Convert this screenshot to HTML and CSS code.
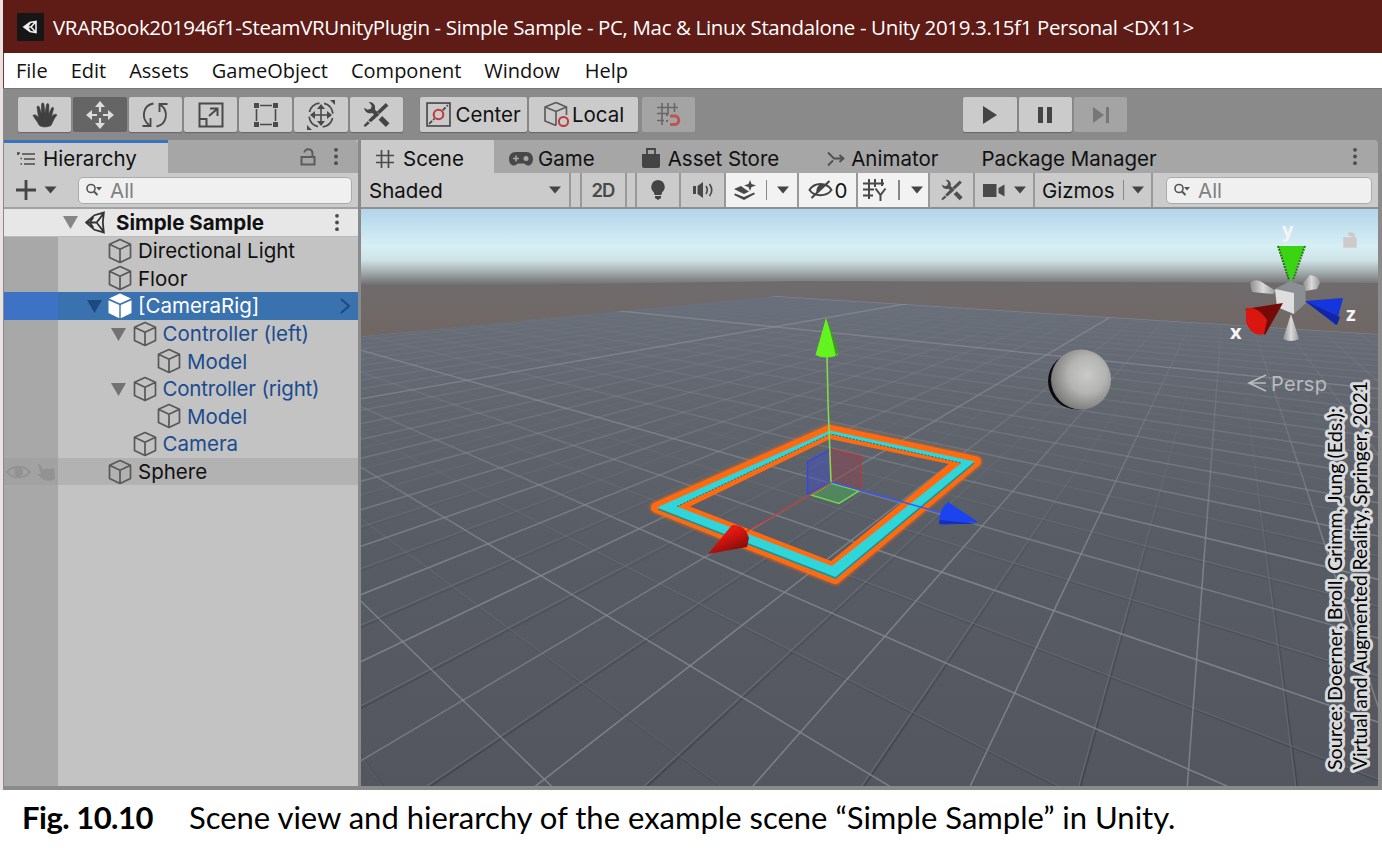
FILE: index.html
```
<!DOCTYPE html>
<html lang="en">
<head>
<meta charset="utf-8">
<title>Simple Sample - Unity</title>
<link rel="stylesheet" href="styles.css">
</head>
<body>
<svg class="defs" width="0" height="0" aria-hidden="true">
  <symbol id="cube" viewBox="0 0 24 26"><path d="M12 1.500 22.500 6.300V19.500L12 24.500 1.500 19.500V6.300ZM1.500 6.300 12 11.300 22.500 6.300M12 11.300V24.500" fill="none" stroke="#585858" stroke-width="1.700" stroke-linejoin="round"/></symbol>
  <symbol id="cubeSolid" viewBox="0 0 24 26"><path d="M12 .500 23 5.500 12 10.500 1 5.500ZM.500 7.200 11.300 12V25.300L.500 20ZM23.500 7.200 12.700 12V25.300L23.500 20Z" fill="#fff"/></symbol>
  <symbol id="dots" viewBox="0 0 6 20"><circle cx="3" cy="3" r="2"/><circle cx="3" cy="10" r="2"/><circle cx="3" cy="17" r="2"/></symbol>
  <symbol id="down" viewBox="0 0 12 8"><path d="M0 .500H12L6 7.500Z"/></symbol>
  <symbol id="search" viewBox="0 0 18 14"><circle cx="6" cy="5.500" r="4" fill="none" stroke="#555" stroke-width="1.600"/><path d="M9 8.500 12.500 12" stroke="#555" stroke-width="2"/><path d="M11 4H17L14 7.500Z" fill="#555"/></symbol>
  <symbol id="tools" viewBox="0 0 28 28"><path d="M23 3 25.500 5.500 17 13.500 14.500 11ZM14 11.500 17 14 8.500 21.500 6 19.500ZM5.500 20.500 7.500 22.500 3 26 1.500 24.500Z"/><path d="M2 7.500C3 12.500 6.500 13.500 10 12.500L12.500 15 15.500 12 12.500 9.500C13.500 5.500 11 1.500 6.500 2L9.500 5.500 8.500 8.500 5.500 9.500Z"/><path d="M19.500 15.500 26.500 22.500 23 26 16 19Z"/></symbol>
  <symbol id="lock" viewBox="0 0 16 18"><path d="M1.500 9H14.500V16.500H1.500ZM12.500 9V5.500C12.500 0 4.500 0 4.500 4.500" fill="none" stroke="currentColor" stroke-width="2"/></symbol>
</svg>

<main class="figure">
<div class="window">
  <header class="titlebar">
    <svg class="app-icon" viewBox="0 0 27 28"><rect width="27" height="28" fill="#161616"/><path d="M7 14 13 9.500 19 8.500V19.500L13 18.500ZM7 14H14L19 8.500M14 14 19 19.500M10 14 13 10M10 14 13 18" fill="none" stroke="#eee" stroke-width="1.600"/></svg>
    <span class="t title">VRARBook201946f1-SteamVRUnityPlugin - Simple Sample - PC, Mac &amp; Linux Standalone - Unity 2019.3.15f1 Personal &lt;DX11&gt;</span>
  </header>
  <nav class="menubar">
    <span class="t">File</span><span class="t">Edit</span><span class="t">Assets</span><span class="t">GameObject</span><span class="t">Component</span><span class="t">Window</span><span class="t help">Help</span>
  </nav>

  <div class="toolbar">
    <div class="group transform">
      <button class="btn"><svg viewBox="0 0 28 28" width="28" height="28"><path d="M8 24C6 20 4 18 2 14.500 3 13 5 13.500 7.500 16.500L6 6.500C6 4.500 8 4.500 8.500 6.500L10.500 13 10.500 3.500C10.500 1.500 13 1.500 13 3.500L14 12.500 15.500 3.500C16 2 18 2.500 17.900 4L17.800 13 20.500 7C21.500 5.500 23 6.500 22.500 8L20.500 15.500C23 13 25 12.500 26 14 23 17 22 21 20 24.500 17 26.500 10 26.500 8 24Z" fill="#404040" stroke="#404040" stroke-width=".6"/></svg></button>
      <button class="btn on"><svg viewBox="0 0 28 28" width="28" height="28"><path d="M14 4V11M14 17V24M4 14H11M17 14H24" stroke="#ddd" stroke-width="2.200"/><path d="M14 0 19 6H9ZM14 28 19 22H9ZM0 14 6 9V19ZM28 14 22 9V19Z" fill="#ddd"/></svg></button>
      <button class="btn"><svg viewBox="0 0 28 28" width="28" height="28"><path d="M12.500 2.500C2 4 -.500 17 8 24M15.500 25.500C26 23.500 28.500 10 19 3.500M1.500 25H9.500V17M26.500 3H18.500V11" fill="none" stroke="#4a4a4a" stroke-width="1.900"/></svg></button>
      <button class="btn"><svg viewBox="0 0 28 28" width="28" height="28"><path d="M2.500 2.500H25.500V25.500H2.500ZM2.500 18H9.500V25.500M12 15 20 8M13 7.500H20.500V15" fill="none" stroke="#4a4a4a" stroke-width="2"/></svg></button>
      <button class="btn"><svg viewBox="0 0 28 28" width="28" height="28"><path d="M8 4.500H20M8 23.500H20M4.500 8V20M23.500 8V20" fill="none" stroke="#4a4a4a" stroke-width="1.600"/><path d="M2 2H7V7H2ZM21 2H26V7H21ZM2 21H7V26H2ZM21 21H26V26H21Z" fill="#4a4a4a"/></svg></button>
      <button class="btn"><svg viewBox="0 0 30 30" width="30" height="30"><circle cx="15" cy="15" r="12" fill="none" stroke="#4a4a4a" stroke-width="1.700" stroke-dasharray="14 4.800" stroke-dashoffset="-3"/><path d="M15 8V22M8 15H22" stroke="#4a4a4a" stroke-width="1.600"/><path d="M15 4 19 9H11ZM15 26 19 21H11ZM4 15 9 11V19ZM26 15 21 11V19ZM24 0H29V5ZM1 25V30H6Z" fill="#4a4a4a"/></svg></button>
      <button class="btn"><svg viewBox="0 0 28 28" width="29" height="29" fill="#454545"><use href="#tools"/></svg></button>
    </div>
    <div class="group pivot">
      <button class="btn center"><svg viewBox="0 0 24 24" width="25" height="25"><rect x="1" y="1" width="22" height="22" fill="none" stroke="#4a4a4a" stroke-width="1.600"/><path d="M3 21 8 16M16 8 21 3" stroke="#4a4a4a" stroke-width="1.800" stroke-dasharray="4 1.500"/><circle cx="12" cy="12" r="4.600" fill="none" stroke="#c33a3a" stroke-width="2"/></svg><span class="t">Center</span></button>
      <button class="btn local"><svg viewBox="0 0 28 28" width="28" height="28"><path d="M13 1.500 23.500 6V14M13 24.500 2 20V6L13 1.500M2 6 13 10.500 23.500 6M13 10.500V24.500" fill="none" stroke="#585858" stroke-width="1.600"/><circle cx="20.500" cy="20.500" r="4.600" fill="#cbcbcb" stroke="#c33a3a" stroke-width="2"/></svg><span class="t">Local</span></button>
      <button class="btn dim snap"><svg viewBox="0 0 26 26" width="26" height="26"><path d="M6 1V23M12 1V11M18.500 1V10M1 5.500H22M1 11.500H13M1 18.500H8" stroke="#686868" stroke-width="1.600"/><path d="M10 13H12M10 19H12" stroke="#686868" stroke-width="2"/><path d="M14 14H19C24 14 24 22.500 19 22.500H14" fill="none" stroke="#bd5555" stroke-width="3"/></svg></button>
    </div>
    <div class="group play">
      <button class="btn"><svg viewBox="0 0 16 20" width="16" height="20"><path d="M1 1 15 10 1 19Z" fill="#444"/></svg></button>
      <button class="btn"><svg viewBox="0 0 16 18" width="16" height="18"><path d="M1 1H6V17H1ZM10 1H15V17H10Z" fill="#444"/></svg></button>
      <button class="btn dim"><svg viewBox="0 0 18 18" width="18" height="18"><path d="M1 1 12 9 1 17ZM14 1H17V17H14Z" fill="#777"/></svg></button>
    </div>
  </div>

  <div class="workspace">
    <section class="hierarchy">
      <div class="tabs">
        <div class="tab active"><svg viewBox="0 0 18 16" width="18" height="16"><path d="M5 3H18M7 8H18M7 13H18" stroke="#4a4a4a" stroke-width="1.700"/><path d="M0 2H3M3.500 7.500H5M3.500 13H5M1 2V4" stroke="#4a4a4a" stroke-width="1.700"/></svg><span class="t">Hierarchy</span></div>
        <svg class="lock" width="16" height="18"><use href="#lock"/></svg>
        <svg class="more" width="6" height="19"><use href="#dots"/></svg>
      </div>
      <div class="tools">
        <svg class="plus" viewBox="0 0 42 22" width="42" height="22"><path d="M10 1V21M0 11H20" stroke="#444" stroke-width="2.800"/><path d="M28.500 7.500H40.500L34.500 14.500Z" fill="#444"/></svg>
        <div class="search"><svg width="18" height="14"><use href="#search"/></svg><span class="t">All</span></div>
      </div>
      <div class="scene-row"><svg class="arrow" width="15" height="13"><path d="M0 0H15L7.500 13Z" fill="#868686"/></svg><svg viewBox="0 0 22 22" width="23" height="23"><path d="M2 11 10 4 19 1.500 18 11 19 20.500 10 18ZM2 11H12L19 2M12 11 19 20M5.500 11 9 6M5.500 11 9 16" fill="none" stroke="#333" stroke-width="1.700"/></svg><span class="t">Simple Sample</span><svg class="more" width="6" height="19"><use href="#dots"/></svg></div>
      <ul class="tree">
        <li class="row d1"><svg class="cube"><use href="#cube"/></svg><span class="t">Directional Light</span></li>
        <li class="row d1"><svg class="cube"><use href="#cube"/></svg><span class="t">Floor</span></li>
        <li class="row d1 selected"><svg class="arrow" width="15" height="13"><path d="M0 0H15L7.500 13Z" fill="#1c4a80"/></svg><svg class="cube"><use href="#cubeSolid"/></svg><span class="t">[CameraRig]</span><svg class="chev" viewBox="0 0 10 16" width="10" height="16"><path d="M1 1 9 8 1 15" fill="none" stroke="#1c4a80" stroke-width="2"/></svg></li>
        <li class="row d2 prefab"><svg class="arrow" width="15" height="13"><path d="M0 0H15L7.500 13Z" fill="#727272"/></svg><svg class="cube"><use href="#cube"/></svg><span class="t">Controller (left)</span></li>
        <li class="row d3 prefab"><svg class="cube"><use href="#cube"/></svg><span class="t">Model</span></li>
        <li class="row d2 prefab"><svg class="arrow" width="15" height="13"><path d="M0 0H15L7.500 13Z" fill="#727272"/></svg><svg class="cube"><use href="#cube"/></svg><span class="t right">Controller (right)</span></li>
        <li class="row d3 prefab"><svg class="cube"><use href="#cube"/></svg><span class="t">Model</span></li>
        <li class="row d2 prefab"><svg class="cube"><use href="#cube"/></svg><span class="t">Camera</span></li>
        <li class="row d1 hover"><svg class="vis" viewBox="0 0 50 20" width="50" height="20"><path d="M1 10C7 3 18 3 24 10 18 17 7 17 1 10Z" fill="none" stroke="#929292" stroke-width="1.800"/><circle cx="12.500" cy="10" r="4.500" fill="#929292"/><path d="M32 2C34 1 35 3 37 8L40 6 43 7 48 6 49 17 45 19 38 18 31 12 35 12Z" fill="#929292"/></svg><svg class="cube"><use href="#cube"/></svg><span class="t">Sphere</span></li>
      </ul>
    </section>

    <section class="sceneview">
      <div class="tabs">
        <div class="tab active scene"><svg viewBox="0 0 18 18" width="18" height="18"><path d="M5.500 0V18M12.500 0V18M0 5.500H18M0 12.500H18" stroke="#4a4a4a" stroke-width="1.700"/></svg><span class="t">Scene</span></div>
        <div class="tab game"><svg viewBox="0 0 24 14" width="24" height="14"><path d="M7 0H17C27 0 25 14 19 13.500 17 13.500 16 11.500 14.500 11.500H9.500C8 11.500 7 13.500 5 13.500-1 14-3 0 7 0Z" fill="#484848"/><path d="M7 3.500V9.500M4 6.500H10" stroke="#a6a6a6" stroke-width="1.600"/><circle cx="17" cy="6.500" r="2.500" fill="#a6a6a6"/></svg><span class="t">Game</span></div>
        <div class="tab store"><svg viewBox="0 0 18 21" width="18" height="21"><path d="M0 6H18V18Q18 20 16 20H2Q0 20 0 18Z" fill="#444"/><path d="M5 9V1H13V9" fill="none" stroke="#444" stroke-width="1.800"/></svg><span class="t">Asset Store</span></div>
        <div class="tab animator"><svg viewBox="0 0 18 16" width="18" height="16"><path d="M1 1.500 7 7.500H16M1 14.500 6 9.500M12.500 4 16.500 7.500 12.500 11" fill="none" stroke="#505050" stroke-width="1.800"/></svg><span class="t">Animator</span></div>
        <div class="tab package"><span class="t">Package Manager</span></div>
        <svg class="more" width="6" height="19"><use href="#dots"/></svg>
      </div>
      <div class="scenebar">
        <div class="cell shaded"><span class="t">Shaded</span><svg class="dn" width="12" height="8"><use href="#down"/></svg></div>
        <div class="cell gap"></div>
        <div class="cell two"><span class="t">2D</span></div>
        <div class="cell gap"></div>
        <div class="cell bulb"><svg viewBox="0 0 16 22" width="16" height="22"><path d="M8 1A7 7 0 0 1 12 13.500L11.500 16H4.500L4 13.500A7 7 0 0 1 8 1ZM5 17H11V19L8 21 5 19Z" fill="#444"/></svg></div>
        <div class="cell sound"><svg viewBox="0 0 22 18" width="22" height="18"><path d="M1 5H4V13H1ZM5.500 5 11 1V17L5.500 13Z" fill="#484848"/><path d="M14 5Q16.500 9 14 13M17.500 3Q22 9 17.500 15" fill="none" stroke="#484848" stroke-width="1.600"/></svg></div>
        <div class="cell lit fx"><svg viewBox="0 0 22 20" width="22" height="20"><path d="M16 0 17.500 4 22 5.500 17.500 7 16 11 14.500 7 10 5.500 14.500 4ZM0 9 7 6 11 9 15 11.500 10 14ZM1 13.500 10 17 20 12.500 21 14 10 20 0 15Z" fill="#484848"/></svg><i class="bar"></i><svg class="dn" width="12" height="8"><use href="#down"/></svg></div>
        <div class="cell lit eye"><svg viewBox="0 0 24 20" width="25" height="20"><path d="M1 10C6 2 18 2 23 10 18 17 6 17 1 10ZM3 18 21 1" fill="none" stroke="#444" stroke-width="2"/><path d="M8 13 16 5C12 2 7 7 8 13Z" fill="#444"/></svg><span class="t">0</span></div>
        <div class="cell lit gridc"><svg viewBox="0 0 24 24" width="24" height="24"><path d="M6 1V21M12 1V9M19 1V8M0 5.500H21M0 11.500H11M0 17.500H10M12.500 10.500 17.500 17 22.500 10.500M17.500 16V23" fill="none" stroke="#484848" stroke-width="2"/></svg><i class="bar"></i><svg class="dn" width="12" height="8"><use href="#down"/></svg></div>
        <div class="cell wrench"><svg viewBox="0 0 28 28" width="24" height="24" fill="#505050"><use href="#tools"/></svg></div>
        <div class="cell cam"><svg viewBox="0 0 22 15" width="22" height="15"><path d="M0 1H13.500V14H0ZM15.500 5 21.500 1.500V13.500L15.500 10Z" fill="#4a4a4a"/></svg><svg class="dn" width="12" height="8"><use href="#down"/></svg></div>
        <div class="cell gizmos"><span class="t">Gizmos</span><i class="bar"></i><svg class="dn" width="12" height="8"><use href="#down"/></svg></div>
        <div class="search"><svg width="18" height="14"><use href="#search"/></svg><span class="t">All</span></div>
      </div>

      <svg class="viewport" viewBox="361 209 1017 577" width="1017" height="577">
        <defs>
          <linearGradient id="sky" x1="0" y1="209" x2="0" y2="290" gradientUnits="userSpaceOnUse"><stop offset="0" stop-color="#b3d4e9"/><stop offset=".45" stop-color="#d6eff5"/><stop offset=".63" stop-color="#cfe3e6"/><stop offset=".78" stop-color="#a3adaf"/><stop offset=".94" stop-color="#6f6c6d"/><stop offset="1" stop-color="#6e6767"/></linearGradient>
          <linearGradient id="ground" x1="0" y1="283" x2="0" y2="337" gradientUnits="userSpaceOnUse"><stop offset="0" stop-color="#6f6b6d"/><stop offset="1" stop-color="#706763"/></linearGradient>
          <linearGradient id="floor" x1="0" y1="296" x2="0" y2="786" gradientUnits="userSpaceOnUse"><stop offset="0" stop-color="#6a707b"/><stop offset=".2" stop-color="#61666f"/><stop offset=".5" stop-color="#585c65"/><stop offset="1" stop-color="#53565e"/></linearGradient>
          <linearGradient id="majorInk" x1="0" y1="300" x2="0" y2="560" gradientUnits="userSpaceOnUse"><stop offset="0" stop-color="#868a90" stop-opacity="0"/><stop offset=".3" stop-color="#868a90" stop-opacity=".25"/><stop offset="1" stop-color="#868a90" stop-opacity=".8"/></linearGradient>
          <linearGradient id="minorInk" x1="0" y1="340" x2="0" y2="600" gradientUnits="userSpaceOnUse"><stop offset="0" stop-color="#7c8087" stop-opacity="0"/><stop offset="1" stop-color="#7c8087" stop-opacity=".4"/></linearGradient>
          <linearGradient id="shadeInk" x1="0" y1="480" x2="0" y2="780" gradientUnits="userSpaceOnUse"><stop offset="0" stop-color="#3b3e45" stop-opacity="0"/><stop offset="1" stop-color="#3b3e45" stop-opacity=".65"/></linearGradient>
          <clipPath id="plane"><path d="M361 336.500 775 296 1378 334V786H361Z"/></clipPath>
          <radialGradient id="ball" cx=".6" cy=".42" r=".62"><stop offset="0" stop-color="#cacac9"/><stop offset=".5" stop-color="#b4b4b3"/><stop offset="1" stop-color="#787978"/></radialGradient>
          <linearGradient id="redCone" x1="0" y1="0" x2=".6" y2="1"><stop offset="0" stop-color="#f03020"/><stop offset=".5" stop-color="#d81410"/><stop offset="1" stop-color="#7d0c08"/></linearGradient>
          <linearGradient id="grey" x1="0" x2="1"><stop offset="0" stop-color="#8d8d8d"/><stop offset=".5" stop-color="#dadada"/><stop offset="1" stop-color="#989898"/></linearGradient>
          <filter id="soft" x="-10%" y="-10%" width="120%" height="120%"><feGaussianBlur stdDeviation="1.100"/></filter>
        </defs>
        <rect x="361" y="209" width="1017" height="90" fill="url(#sky)"/>
        <path d="M361 287 800 281 1378 283V350H361Z" fill="url(#ground)"/>
        <path d="M361 336.500 775 296 1378 334V786H361Z" fill="url(#floor)"/>
        <g clip-path="url(#plane)">
          <g id="shade" stroke="url(#shadeInk)" stroke-width="2"></g>
          <g id="minor" stroke="url(#minorInk)" stroke-width="1.300"></g>
          <g id="major" stroke="url(#majorInk)" stroke-width="1.500"></g>
          <g id="axis" stroke="#90939a" stroke-opacity=".55" stroke-width="1.500"></g>
        </g>

        <ellipse cx="1077.500" cy="381" rx="29.500" ry="28.500" fill="#0b0b0b"/>
        <circle cx="1081" cy="379.500" r="30" fill="url(#ball)"/>

        <g fill="none" stroke="#ff6a10" stroke-linejoin="round">
          <path d="M829.500 430 976 461.500 835.500 579 656 507.500Z" stroke-width="13" opacity=".5" filter="url(#soft)"/>
          <path d="M829.500 430 976 461.500 835.500 579 656 507.500Z" stroke-width="10"/>
        </g>
        <path d="M829.500 430 976 461.500 835.500 579 656 507.500ZM830 439 690 506.500 831 561 949 464Z" fill="#ff6a10" fill-rule="evenodd"/>
        <path d="M830 430.500 975 461.500 835.500 579 657 507.500ZM830 434 677 506.500 832 566 961.500 463Z" fill="#2fd5d9" fill-rule="evenodd"/>
        <path d="M658 509 835.500 578 974 463" fill="none" stroke="#1c8f93" stroke-width="1.600"/>
        <path d="M677 506.500 830 434 961.500 463" fill="none" stroke="#197276" stroke-width="1" stroke-dasharray="2 1.500"/>

        <path d="M831 482 807.500 494V462L831 449Z" fill="#4250c0" fill-opacity=".5" stroke="#3346e6" stroke-width="1.300"/>
        <path d="M831 482 861 490V456L831 449Z" fill="#8a4450" fill-opacity=".5" stroke="#b73a3c" stroke-width="1.300"/>
        <path d="M831 483 859 491 839 503.500 811 495Z" fill="#48a558" fill-opacity=".55" stroke="#70d850" stroke-width="1.500"/>
        <path d="M831 483 740 535" stroke="#c23a36" stroke-width="1.300"/>
        <path d="M831 482 942 513" stroke="#3b57ee" stroke-width="1.400"/>
        <path d="M827 355 828 402 831 482" fill="none" stroke="#7fdd48" stroke-width="1.600"/>
        <path d="M826 318 815.500 355Q826 360 838 355Z" fill="#63f31f"/><path d="M827 318 838.500 352 836 356Z" fill="#3f9e1c"/>
        <path d="M708 554 732 525Q745 524 749 538L747 547Z" fill="url(#redCone)"/>
        <path d="M978 522 948 502Q939 509 939 524L944 525Z" fill="#1c43f0"/><path d="M978 524 939 524 940 520Z" fill="#172fb4"/>

        <g>
          <path d="M1250 283Q1253 279 1260 281L1276 291 1273 294 1252 292Z" fill="url(#grey)"/>
          <path d="M1303 283 1310 275Q1319 276 1320 283L1317 289 1305 291Z" fill="url(#grey)"/>
          <path d="M1275 289 1290 281 1305 286 1306 303 1294 314 1277 307Z" fill="#8c8f92"/>
          <path d="M1275 289 1294 293V314L1277 307Z" fill="#dededf"/>
          <path d="M1291 282 1278 246H1305Z" fill="#3bd413"/><path d="M1278 246 1289 280" stroke="#1d6d10" stroke-width="2" stroke-dasharray="2 1"/><path d="M1305 246 1293 280" stroke="#247b12" stroke-width="2" stroke-dasharray="2 1"/>
          <path d="M1291 314 1283 339Q1291 343 1299 339Z" fill="url(#grey)"/>
          <path d="M1283 303 1245 309 1265 335Z" fill="#740b07"/><path d="M1246 308Q1258 306 1267 320L1264 334Q1251 337 1246 322Z" fill="#d91610"/>
          <path d="M1305 301 1343 298 1336 325Z" fill="#1636dd"/><path d="M1305 301 1337 325 1340 317Z" fill="#1226a4"/>
          <g class="axis-name"><text x="1282" y="237">y</text><text x="1230" y="339">x</text><text x="1346" y="321">z</text></g>
          <path d="M1344 238H1356V247H1344ZM1354 238V234Q1350 231 1348 235" fill="#cfcaca" stroke="#cfcaca" stroke-width="1.500"/>
          <path d="M1266 375 1249 383 1266 391M1250 383H1266" fill="none" stroke="#b9bcc0" stroke-width="1.600"/>
          <text class="persp" x="1271" y="391" textLength="56">Persp</text>
        </g>
        <g class="source">
          <text transform="translate(1342 770) rotate(-90)" textLength="362" lengthAdjust="spacingAndGlyphs">Source: Doerner, Broll, Grimm, Jung (Eds.):</text>
          <text transform="translate(1367 770) rotate(-90)" textLength="389" lengthAdjust="spacingAndGlyphs">Virtual and Augmented Reality, Springer, 2021</text>
        </g>
      </svg>
    </section>
  </div>
</div>
<footer class="caption"><b class="t">Fig. 10.10</b><span class="t">Scene view and hierarchy of the example scene “Simple Sample” in Unity.</span></footer>
</main>
<script src="grid.js"></script>
</body>
</html>
```

FILE: styles.css
```
* { box-sizing: border-box; }
body { margin: 0; background: #fff; overflow: hidden; }
.defs { position: absolute; }
svg { display: block; flex: none; }
.figure { width: 1382px; height: 848px; display: flex; flex-direction: column; }
.window { height: 790px; border-left: 3px solid #e9e3e3; background: #8e8e8e; font-family: Inter, "Liberation Sans", sans-serif; font-size: 20.5px; color: #111; display: flex; flex-direction: column; }
.t { white-space: nowrap; }

.titlebar { height: 53px; background: #5f1b16; display: flex; align-items: center; padding-left: 14px; color: #fff; font: 20.5px "Open Sans", sans-serif; letter-spacing: -.36px; }
.app-icon { width: 27px; height: 28px; margin-right: 9px; }
.menubar { height: 35px; background: #fff; border-left: 1px solid #7b3230; display: flex; align-items: center; padding-left: 12px; gap: 23px; color: #111; font: 20px "Open Sans", sans-serif; }
.help { margin-left: 2px; }

.toolbar { height: 52px; background: #8a8a8a; display: flex; align-items: flex-start; padding: 8px 0 0 15px; border-top: 1px solid #777; }
.group { display: flex; gap: 2px; }
.pivot { margin-left: 17px; }
.play { margin-left: 268px; }
.btn { width: 53.300px; height: 35px; padding: 0; margin: 0; border: 0; border-radius: 2px; background: #cbcbcb; box-shadow: 0 1px 1px #666; display: flex; align-items: center; justify-content: center; font: inherit; color: #111; }
.btn.on { background: #656565; box-shadow: none; }
.btn.dim { background: #a4a4a4; box-shadow: none; }
.btn.center { width: 107px; gap: 4px; }
.btn.local { width: 109px; gap: 1px; }
.btn.snap { margin-left: 2px; }

.workspace { height: 650px; display: flex; padding-left: 1px; gap: 3px; background: #8a8a8a; }
.hierarchy { width: 354px; height: 646px; background: #c3c3c3; }
.tabs { height: 33px; background: #a6a6a6; display: flex; align-items: center; border-radius: 0 4px 0 0; }
.tab { height: 33px; display: flex; align-items: center; padding-top: 4px; }
.tab.active { background: #cbcbcb; }
.hierarchy .tab { width: 164px; border-top: 3px solid #3b72bf; padding: 1px 0 0 13px; gap: 8px; }
.lock { color: #5c5c5c; margin-left: 132px; }
.more { fill: #4c4c4c; margin-left: 17px; }
.tools { height: 36px; background: #cbcbcb; border-bottom: 2px solid #a2a2a2; display: flex; align-items: center; padding-left: 12px; }
.search { height: 27px; background: #f0f0f0; border: 1px solid #aaa; border-radius: 5px; display: flex; align-items: center; gap: 7px; color: #808080; }
.tools .search { width: 274px; margin-left: 20px; padding-left: 6px; }
.scene-row { height: 28px; background: #e7e7e7; display: flex; align-items: center; padding-left: 59px; font-weight: 700; border-bottom: 1px solid #bbb; }
.scene-row .t { margin: 0 auto 0 9px; }
.scene-row .arrow { margin-right: 6px; }
.scene-row .more { margin: 0 18px 0 0; }
.tree { list-style: none; margin: 0; padding: 0; height: 549px; background: linear-gradient(90deg, #a8a8a8 54px, #c3c3c3 54px); }
.row { height: 27.600px; display: flex; align-items: center; }
.cube { width: 24px; height: 26px; margin-right: 6px; }
.d1 { padding-left: 104px; }
.d2 { padding-left: 128.500px; }
.d3 { padding-left: 153px; }
.row .arrow { margin: 2px 6.500px 0 -21.500px; }
.prefab { color: #1b4b8f; }
.right { letter-spacing: -.2px; }
.selected { background: linear-gradient(90deg, #3e72c4 54px, #3a72b0 54px); color: #fff; }
.chev { margin: 0 8px 0 auto; }
.hover { background: linear-gradient(90deg, #a2a2a2 54px, #b2b2b2 54px); }
.vis { margin: 0 52px 0 -102px; }

.sceneview { width: 1017px; }
.scene { width: 133px; padding-left: 15px; gap: 9px; }
.game { padding-left: 15px; gap: 5px; }
.store { margin-left: 47px; gap: 8px; }
.animator { margin-left: 48px; gap: 6px; }
.package { margin-left: 43px; }
.sceneview .more { margin: 0 20px 0 auto; }
.scenebar { height: 36px; background: #cbcbcb; border-bottom: 2px solid #909090; display: flex; align-items: center; }
.cell { height: 34px; border-right: 2px solid #999; display: flex; align-items: center; justify-content: center; flex: none; }
.lit { background: #f2f2f2; }
.shaded { width: 210px; padding: 0 8px; justify-content: space-between; }
.gap { width: 10.500px; }
.two { width: 45px; color: #4a4a4a; font-weight: 600; font-size: 18.5px; letter-spacing: -1px; }
.bulb { width: 44px; }
.sound { width: 45px; }
.fx { width: 73px; gap: 10px; }
.eye { width: 59px; gap: 2px; }
.gridc { width: 72px; gap: 11px; }
.wrench { width: 45px; }
.cam { width: 60px; gap: 9px; }
.gizmos { width: 118px; gap: 8px; }
.bar { width: 1.500px; height: 20px; background: #888; }
.dn { fill: #444; }
.scenebar .search { width: 206px; margin-left: 13px; padding-left: 6px; }

.viewport { background: #585c65; }
.axis-name { font: bold 20px "Open Sans", sans-serif; fill: #f4f4f4; }
.persp { font: 20px Inter, sans-serif; fill: #b9bcc0; }
.source { font: 19.5px Lato, sans-serif; fill: #000; stroke: #d9dadc; stroke-width: 6px; stroke-linejoin: round; paint-order: stroke; }

.caption { height: 58px; display: flex; align-items: center; padding: 0 0 4px 22px; gap: 36px; font: 31px Lato, sans-serif; color: #000; }
.caption b { letter-spacing: -.5px; }
```

FILE: grid.js
```
// Projects the floor grid: O is the world origin on screen, VU / VV the vanishing points of its two axes.
const O = [830, 483], VU = [-4, 247], VV = [1227, 248];
const A = -0.0771, B = -0.1201;
const ns = "http://www.w3.org/2000/svg";

function project(u, v) {
  const w = 1 + u * A + v * B;
  return [0, 1].map(k => (O[k] + u * A * VU[k] + v * B * VV[k]) / w);
}

function draw(layer, from, through, shift = 0) {
  const dx = through[0] - from[0], dy = through[1] - from[1];
  const reach = 4000 / Math.hypot(dx, dy);
  const line = document.createElementNS(ns, "line");
  line.setAttribute("x1", from[0] + shift);
  line.setAttribute("y1", from[1] + shift);
  line.setAttribute("x2", (from[0] + dx * reach + shift).toFixed(1));
  line.setAttribute("y2", (from[1] + dy * reach + shift).toFixed(1));
  document.getElementById(layer).appendChild(line);
}

// A line n cells from the origin; beyond the camera plane (w <= 0) the same ray continues downwards.
function through(u, v, vanish) {
  const w = 1 + u * A + v * B;
  const p = project(u, v);
  return w > 0 ? p : [2 * vanish[0] - p[0], 2 * vanish[1] - p[1]];
}

for (let n = -30; n <= 30; n += 0.5) {
  const axis = n % 10 === 0, whole = Math.abs(n % 1) < 0.01;
  const layer = axis ? "axis" : whole ? "major" : "minor";
  if (!whole) {
    draw("shade", VU, through(0, n, VU), 1.5);
    draw("shade", VV, through(n, 0, VV), 1.5);
  }
  draw(layer, VU, through(0, n, VU));
  draw(layer, VV, through(n, 0, VV));
}
```
